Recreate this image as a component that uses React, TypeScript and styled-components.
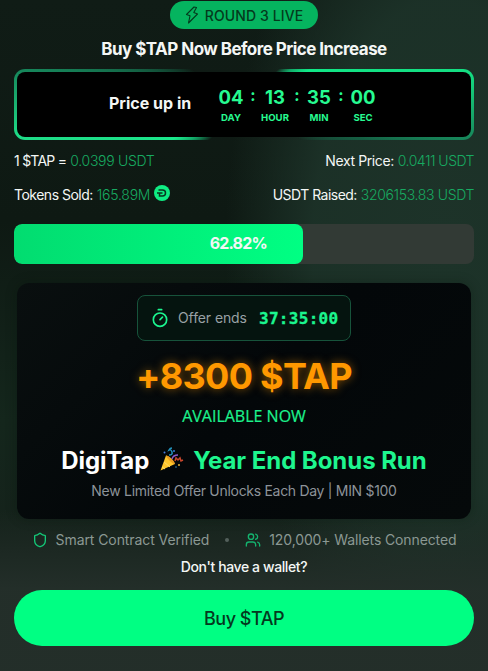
import React from 'react';
import styled, { createGlobalStyle } from 'styled-components';
import { Shield, Timer, Users } from 'lucide-react';

const GlobalStyle = createGlobalStyle`
  * {
    box-sizing: border-box;
  }

  body {
    margin: 0;
    background-color: #101d17;
  }
`;

const Page = styled.main`
  width: 488px;
  height: 671px;
  overflow: hidden;
  padding: 1px 14px 0;
  display: flex;
  flex-direction: column;
  align-items: center;
  font-family: Inter, sans-serif;
  color: #f4f7f5;
  white-space: nowrap;
  background:
    linear-gradient(180deg, rgba(36, 47, 42, 0) 510px, rgba(36, 47, 42, 0.95) 590px),
    radial-gradient(ellipse 220px 420px at 445px 250px, #1d3329 0%, rgba(29, 51, 41, 0.9) 60%, rgba(29, 51, 41, 0) 100%),
    linear-gradient(180deg, #101c16 0, #0e1913 220px, #14261c 420px, #15221b 540px);
`;

const Badge = styled.div`
  width: 148px;
  height: 28px;
  border-radius: 14px;
  display: flex;
  align-items: center;
  justify-content: center;
  gap: 6px;
  flex-shrink: 0;
  background-color: #05b45f;
  color: #043a1d;
`;

interface TextProps {
  size: number;
  weight?: number;
  spacing?: number;
  color?: string;
}

const Text = styled.span<TextProps>`
  font-size: ${(props) => props.size}px;
  font-weight: ${(props) => props.weight || 400};
  letter-spacing: ${(props) => props.spacing || 0}px;
  color: ${(props) => props.color || 'inherit'};
`;

const Heading = styled.h1`
  margin: 8px 0 0;
  height: 24px;
  line-height: 24px;
  font-size: 17px;
  font-weight: 700;
  letter-spacing: -0.54px;
`;

const Countdown = styled.section`
  width: 460px;
  height: 71px;
  margin-top: 8px;
  flex-shrink: 0;
  border: 3px solid transparent;
  border-radius: 11px;
  display: flex;
  align-items: center;
  padding-left: 92px;
  background:
    linear-gradient(#000, #000) padding-box,
    conic-gradient(
      from 0deg at 50% 50%,
      rgba(10, 60, 38, 0) 44deg,
      #12a566 53deg,
      #10e887 62deg,
      #14dd82 82deg,
      #178a5c 98deg,
      #155f43 106deg,
      rgba(10, 60, 38, 0) 122deg,
      rgba(10, 60, 38, 0) 224deg,
      #12a566 236deg,
      #1ae98c 244deg,
      #1edb87 262deg,
      #16855a 279deg,
      #13573d 290deg,
      rgba(10, 60, 38, 0) 304deg
    ) border-box;
`;

const CountdownLabel = styled.div`
  width: 105px;
  padding-bottom: 3px;
  font-size: 16px;
  font-weight: 700;
`;

const Clock = styled.div`
  display: flex;
  color: #26fb91;
`;

const Unit = styled.div`
  width: 34px;
  display: flex;
  flex-direction: column;
  align-items: center;
`;

const UnitValue = styled.div`
  font-size: 18.5px;
  line-height: 25px;
  font-weight: 700;
`;

const UnitName = styled.div`
  font-size: 9.6px;
  line-height: 15px;
  font-weight: 700;
`;

const Colon = styled.div`
  width: 10px;
  text-align: center;
  font-size: 16px;
  line-height: 20px;
  font-weight: 700;
`;

const Stats = styled.div`
  margin-top: 4px;
`;

const StatRow = styled.div`
  width: 460px;
  height: 34px;
  padding-bottom: 1px;
  display: flex;
  align-items: center;
  justify-content: space-between;
`;

const Stat = styled.div`
  display: flex;
  align-items: center;
  gap: 4px;
`;

const Coin = styled.svg`
  margin-bottom: 4px;
`;

const Track = styled.div`
  width: 460px;
  height: 40px;
  margin-top: 12px;
  flex-shrink: 0;
  border-radius: 8px;
  overflow: hidden;
  background-color: #323a35;
`;

const Fill = styled.div`
  height: 100%;
  border-radius: 8px;
  display: flex;
  align-items: center;
  justify-content: flex-end;
  padding: 0 36px 2px 0;
  background: linear-gradient(90deg, #02dc70 0%, #00ff83 100%);
`;

const Offer = styled.section`
  width: 454px;
  height: 236px;
  margin-top: 19px;
  flex-shrink: 0;
  border-radius: 12px;
  display: flex;
  flex-direction: column;
  align-items: center;
  padding-top: 12px;
  background: linear-gradient(135deg, #090f0f 0%, #030709 50%, #05090a 100%);
  box-shadow: 0 0 12px rgba(0, 20, 10, 0.3);
`;

const OfferTimer = styled.div`
  width: 214px;
  height: 46px;
  border: 1px solid #17533b;
  border-radius: 8px;
  display: flex;
  align-items: center;
  padding-left: 12px;
  background-color: #05140f;
  color: #1bf58f;
`;

const OfferLabel = styled.span`
  width: 89px;
  padding: 0 0 1px 8px;
  font-size: 14px;
  letter-spacing: -0.1px;
  color: #99a1a5;
`;

const OfferTime = styled.span`
  font-family: "DejaVu Sans Mono", monospace;
  font-size: 16px;
  font-weight: 700;
  letter-spacing: 0.3px;
  -webkit-text-stroke: 0.3px #1bf58f;
`;

const Bonus = styled.div`
  height: 48px;
  margin-top: 11px;
  line-height: 48px;
  font-size: 36px;
  font-weight: 700;
  letter-spacing: -0.7px;
  color: #ff9800;
  text-shadow: 0 0 10px rgba(255, 152, 0, 0.55);
`;

const Available = styled.div`
  height: 24px;
  margin-top: 4px;
  line-height: 24px;
  font-family: "Open Sans", sans-serif;
  font-size: 16px;
  font-weight: 500;
  color: #1cf28d;
  -webkit-text-stroke: 0.2px #1cf28d;
`;

const Campaign = styled.div`
  height: 34px;
  margin-top: 15px;
  display: flex;
  align-items: center;
  color: #1ef68e;
`;

const Popper = styled.svg`
  margin: 0 9px 1px 10px;
`;

const OfferNote = styled.div`
  line-height: 20px;
  margin-top: 3px;
`;

const Trust = styled.div`
  height: 24px;
  margin-top: 9px;
  padding-bottom: 1px;
  flex-shrink: 0;
  display: flex;
  align-items: center;
  color: #8b9893;
`;

const TrustItem = styled.div`
  display: flex;
  align-items: center;
  gap: 8px;
`;

const Dot = styled.span`
  width: 4px;
  height: 4px;
  margin: 0 16px;
  border-radius: 50%;
  background-color: #53605b;
`;

const WalletHint = styled.div`
  height: 24px;
  line-height: 24px;
  margin-top: 2px;
  flex-shrink: 0;
`;

const BuyButton = styled.button`
  width: 460px;
  height: 56px;
  margin-top: 12px;
  flex-shrink: 0;
  border: 0;
  border-radius: 28px;
  background-color: #00ff83;
  color: #04391e;
  font-family: Inter, sans-serif;
`;

const units = [
  { value: '04', name: 'DAY' },
  { value: '13', name: 'HOUR' },
  { value: '35', name: 'MIN' },
  { value: '00', name: 'SEC' },
];

const green = '#17aa61';

function PartyPopper() {
  return (
    <Popper width="25" height="25" viewBox="0 0 25 25" fill="none">
      <path d="M1.500 23.500 7 8.500Q13 11 16 17Z" fill="#ffc62b" />
      <path d="M7 8.500Q9 8 12.500 11.500T16 17Q13.500 17 10 13T7 8.500Z" fill="#e89b20" />
      <path d="M3 20l3 2M5 15l6 5" stroke="#ffdc6a" />
      <path d="M10 8q4 0 3-3t-3-2q1-2 3-2" stroke="#2394bd" strokeWidth="1.500" />
      <path d="M13 12q1-4 6-4" stroke="#8d59c9" strokeWidth="1.300" />
      <path d="M16 14l1-3 2 2 2-2 1 3 2-1" stroke="#c8472d" strokeWidth="1.500" />
      <circle cx="5.500" cy="5.500" r="1" fill="#477ee0" />
      <circle cx="15" cy="4" r="1" fill="#347bdd" />
      <circle cx="20" cy="18" r="1" fill="#e8b438" />
      <circle cx="17" cy="20" r="0.800" fill="#328fc0" />
    </Popper>
  );
}

function App() {
  return (
    <>
      <GlobalStyle />
      <Page>
        <Badge>
          <svg width="14" height="18" viewBox="0 0 14 18" fill="none" stroke="currentColor" strokeWidth="1.100" strokeLinejoin="round">
            <path d="M9 1 1.500 8.500l3.500 1.300L3.500 17 12.500 8 8.800 6.500 11.500 1.500Z" />
          </svg>
          <Text size={14} weight={500} spacing={0.1}>ROUND 3 LIVE</Text>
        </Badge>
        <Heading>Buy $TAP Now Before Price Increase</Heading>
        <Countdown>
          <CountdownLabel>Price up in</CountdownLabel>
          <Clock>
            {units.map((unit, index) => (
              <React.Fragment key={unit.name}>
                {index > 0 && <Colon>:</Colon>}
                <Unit>
                  <UnitValue>{unit.value}</UnitValue>
                  <UnitName>{unit.name}</UnitName>
                </Unit>
              </React.Fragment>
            ))}
          </Clock>
        </Countdown>
        <Stats>
          <StatRow>
            <Stat>
              <Text size={14} spacing={-0.75}>1 $TAP =</Text>
              <Text size={14} weight={300} spacing={-0.3} color={green}>0.0399 USDT</Text>
            </Stat>
            <Stat>
              <Text size={14} spacing={-0.4}>Next Price:</Text>
              <Text size={14} weight={300} spacing={-0.5} color={green}>0.0411 USDT</Text>
            </Stat>
          </StatRow>
          <StatRow>
            <Stat>
              <Text size={14} spacing={-0.5}>Tokens Sold:</Text>
              <Text size={14} weight={300} spacing={-0.25} color={green}>165.89M</Text>
              <Coin width="16" height="16" viewBox="0 0 16 16" fill="none">
                <circle cx="8" cy="8" r="8" fill="#0fed83" />
                <path d="M4.500 5h4a3 3 0 0 1 0 6H5.500V8.200M3 8h5.500" stroke="#08371f" strokeWidth="1.500" />
              </Coin>
            </Stat>
            <Stat>
              <Text size={14} spacing={-0.52}>USDT Raised:</Text>
              <Text size={14} weight={300} spacing={-0.35} color={green}>3206153.83 USDT</Text>
            </Stat>
          </StatRow>
        </Stats>
        <Track>
          <Fill style={{ width: '62.82%' }}>
            <Text size={16} weight={700} spacing={-0.8}>62.82%</Text>
          </Fill>
        </Track>
        <Offer>
          <OfferTimer>
            <Timer size={20} strokeWidth={2} />
            <OfferLabel>Offer ends</OfferLabel>
            <OfferTime>37:35:00</OfferTime>
          </OfferTimer>
          <Bonus>+8300 $TAP</Bonus>
          <Available>AVAILABLE NOW</Available>
          <Campaign>
            <Text size={24} weight={700} spacing={-0.15} color="#fff">DigiTap</Text>
            <PartyPopper />
            <Text size={24} weight={700} spacing={-0.05}>Year End Bonus Run</Text>
          </Campaign>
          <OfferNote>
            <Text size={14} spacing={-0.3} color="#8d9399">New Limited Offer Unlocks Each Day | MIN $100</Text>
          </OfferNote>
        </Offer>
        <Trust>
          <TrustItem>
            <Shield size={16} color="#14c878" />
            <Text size={14} spacing={-0.08}>Smart Contract Verified</Text>
          </TrustItem>
          <Dot />
          <TrustItem>
            <Users size={16} color="#14b36e" />
            <Text size={14} spacing={-0.12}>120,000+ Wallets Connected</Text>
          </TrustItem>
        </Trust>
        <WalletHint>
          <Text size={14} weight={500} spacing={-0.4}>Don&apos;t have a wallet?</Text>
        </WalletHint>
        <BuyButton>
          <Text size={18} weight={500} spacing={-0.5}>Buy $TAP</Text>
        </BuyButton>
      </Page>
    </>
  );
}

export default App;
